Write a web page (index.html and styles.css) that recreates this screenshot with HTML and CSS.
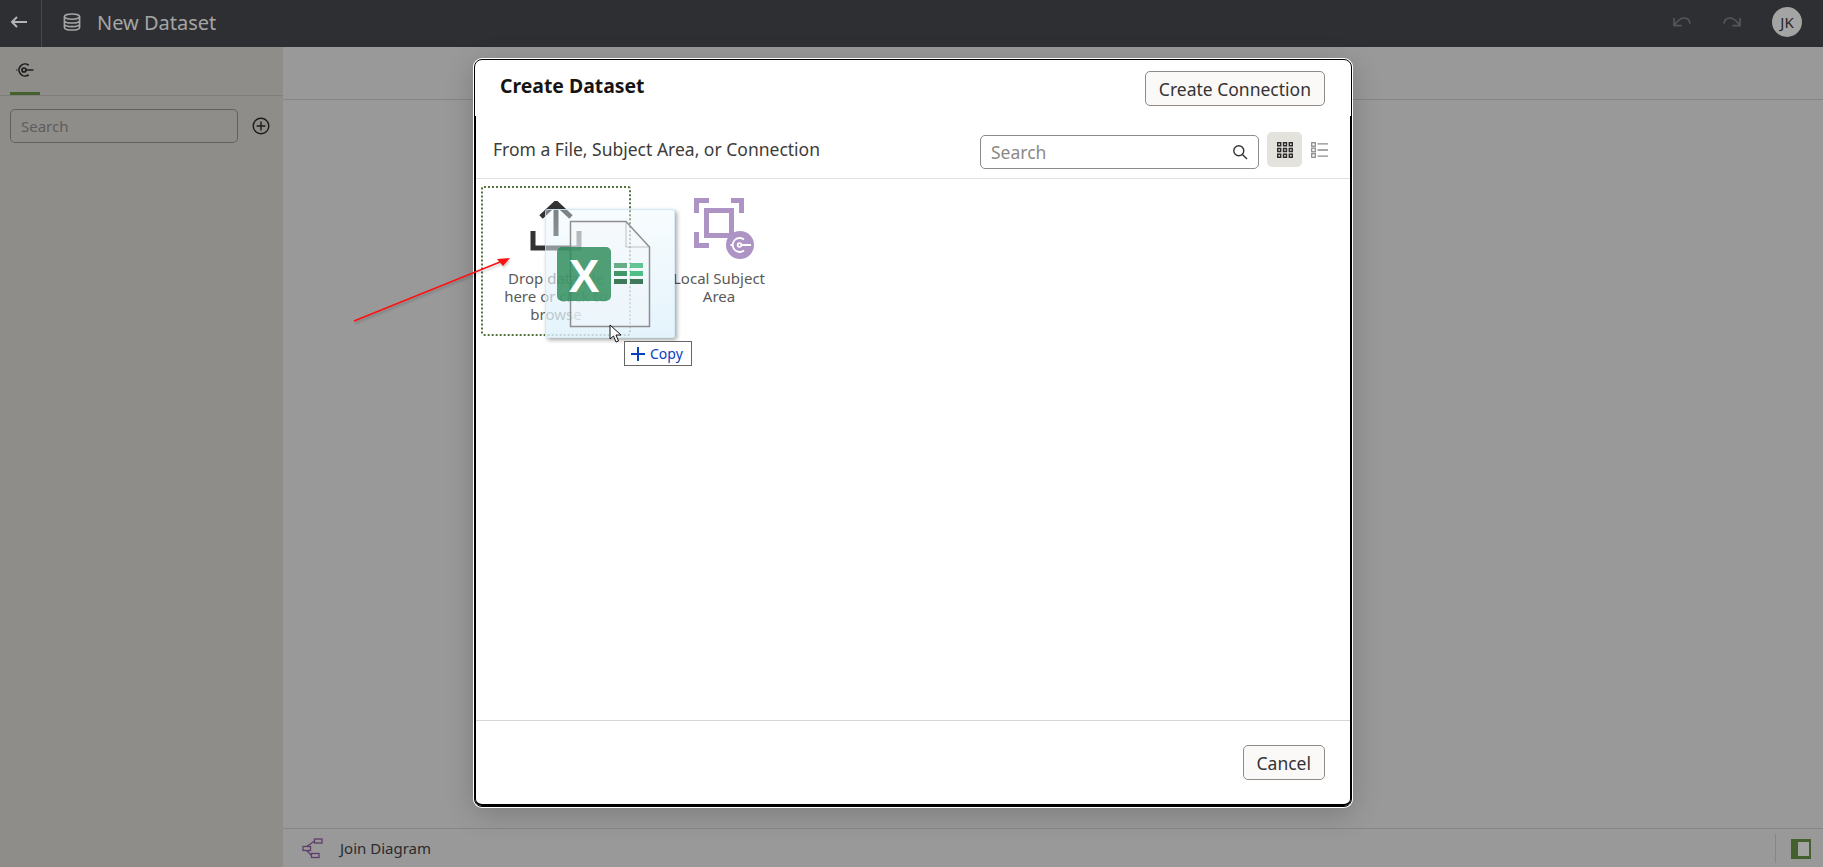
FILE: index.html
```html
<!DOCTYPE html>
<html>
<head>
    <meta charset="UTF-8">
    <title>New Dataset</title>
    <link rel="stylesheet" href="styles.css">
</head>
<body>
    <header class="topbar">
        <div class="back">
            <svg width="18" height="14" viewBox="0 0 18 14"><path d="M17 7H2M7 2L2 7l5 5" fill="none" stroke="#b4b4b4" stroke-width="2"/></svg>
        </div>
        <svg class="db-icon" width="18" height="18" viewBox="0 0 18 18" fill="none" stroke="#a5a5a5" stroke-width="1.6"><ellipse cx="9" cy="3.6" rx="7.6" ry="2.6"/><path d="M1.4 3.6v10.8c0 1.5 3.4 2.6 7.6 2.6s7.6-1.1 7.6-2.6V3.6M1.4 7.4c0 1.5 3.4 2.6 7.6 2.6s7.6-1.1 7.6-2.6M1.4 11c0 1.5 3.4 2.6 7.6 2.6s7.6-1.1 7.6-2.6"/></svg>
        <h1 class="page-title">New Dataset</h1>
        <div class="top-actions">
            <svg width="18" height="12" viewBox="0 0 18 12" fill="none" stroke="#55565a" stroke-width="1.7"><path d="M1 2v7.6h7.6M1.4 9.2C4 5.4 7 2 11 2c3.6 0 5.6 2.6 6 5.6"/></svg>
            <svg class="redo" width="18" height="12" viewBox="0 0 18 12" fill="none" stroke="#55565a" stroke-width="1.7"><path d="M17 2v7.6H9.4M16.6 9.2C14 5.4 11 2 7 2 3.4 2 1.4 4.6 1 7.6"/></svg>
            <div class="avatar">JK</div>
        </div>
    </header>

    <div class="workspace">
        <aside class="side">
            <div class="side-tabs">
                <div class="side-tab">
                    <svg width="18" height="16" viewBox="0 0 18 16" fill="none" stroke="#1c1c1c" stroke-width="1.7"><path d="M12.6 3.2A6 6 0 1 0 12.6 12.8"/><circle cx="8" cy="8" r="2"/><path d="M10 8h7.4M.4 8h1"/></svg>
                </div>
            </div>
            <div class="side-search">
                <div class="side-input">Search</div>
                <svg width="18" height="18" viewBox="0 0 18 18" fill="none" stroke="#1c1c1c" stroke-width="1.4"><circle cx="9" cy="9" r="7.8"/><path d="M9 4.6v8.8M4.6 9h8.8"/></svg>
            </div>
        </aside>
        <main class="canvas">
            <div class="canvas-head"></div>
            <div class="canvas-body"></div>
            <footer class="canvas-foot">
                <svg class="join-icon" width="21" height="21" viewBox="0 0 21 21" fill="none" stroke="#5e3d6a" stroke-width="1.3"><rect x="12.5" y="1" width="7.5" height="4"/><rect x="1" y="8.5" width="7.5" height="4"/><rect x="9.5" y="15.5" width="7.5" height="4"/><path d="M4.8 8.5L12.5 3M4.8 12.5L9.5 17.5"/></svg>
                <span class="join-label">Join Diagram</span>
                <div class="foot-right">
                    <div class="panel-toggle"><div class="panel-toggle-in"></div></div>
                </div>
            </footer>
        </main>
    </div>

    <section class="dialog">
        <div class="dialog-head">
            <h2 class="dialog-title">Create Dataset</h2>
            <button class="btn btn-wide">Create Connection</button>
        </div>
        <div class="dialog-main">
            <div class="toolbar">
                <div class="toolbar-label">From a File, Subject Area, or Connection</div>
                <div class="dialog-search">
                    <span>Search</span>
                    <svg width="16" height="16" viewBox="0 0 16 16" fill="none" stroke="#333" stroke-width="1.4"><circle cx="6.8" cy="6.8" r="5"/><path d="M10.4 10.4L15 15"/></svg>
                </div>
                <div class="view-btn">
                    <svg width="16" height="16" viewBox="0 0 16 16" fill="#2c2c2c">
                        <path fill-rule="evenodd" d="M0 0h4.4v4.4H0zM1.4 1.4v1.6H3V1.400zM5.800 0h4.400v4.400H5.800zM7.200 1.400v1.600h1.600V1.400zM11.600 0H16v4.400h-4.400zM13 1.400v1.600h1.600V1.400zM0 5.800h4.400v4.400H0zM1.400 7.200v1.600H3V7.200zM5.800 5.800h4.400v4.400H5.800zM7.200 7.200v1.600h1.600V7.200zM11.600 5.800H16v4.400h-4.400zM13 7.200v1.600h1.600V7.200zM0 11.600h4.400V16H0zM1.400 13v1.600H3V13zM5.800 11.600h4.400V16H5.800zM7.200 13v1.600h1.600V13zM11.600 11.600H16V16h-4.400zM13 13v1.600h1.600V13z"/>
                    </svg>
                </div>
                <svg class="list-icon" width="17" height="16" viewBox="0 0 17 16" fill="none" stroke="#8d8d8d" stroke-width="1.300"><rect x=".7" y=".7" width="3.600" height="3.600"/><rect x=".7" y="6.200" width="3.600" height="3.600"/><rect x=".7" y="11.700" width="3.600" height="3.600"/><path d="M6.500 1.800H17M6.500 8H17M6.500 14.200H17"/></svg>
            </div>
            <div class="tiles">
                <div class="tile tile-drop">
                    <svg class="tile-icon" width="52" height="50" viewBox="0 0 52 50" fill="none" stroke="#333" stroke-width="5"><path d="M11 16L26 2l15 14M26 3v32M3 30v17h46V30"/></svg>
                    <div class="tile-text">Drop data file here or click to browse</div>
                </div>
                <div class="tile">
                    <svg class="tile-icon tile-icon-area" width="50" height="50" viewBox="0 0 50 50">
                        <g fill="none" stroke="#ae94c4" stroke-width="5"><path d="M2.500 15V2.500H15M37 2.500h10.500V15M15 47.500H2.500V34"/><rect x="12.500" y="12.500" width="25" height="25"/></g>
                        <circle cx="46" cy="47" r="14" fill="#ae94c4"/>
                        <g fill="none" stroke="#fff" stroke-width="1.800"><path d="M50 41.500a7 7 0 1 0 0 11"/><circle cx="45.500" cy="47" r="1.800"/><path d="M47.300 47H57M36.500 47h1.500"/></g>
                    </svg>
                    <div class="tile-text">Local Subject Area</div>
                </div>
            </div>
            <div class="dialog-foot">
                <button class="btn">Cancel</button>
            </div>
        </div>
    </section>

    <!-- drag ghost + annotation sit on top of the dialog -->
    <div class="ghost">
        <svg class="ghost-art" width="130" height="130" viewBox="0 0 130 130">
            <path d="M25.500 12.500H81L104.500 38V117.500H25.500z" fill="#f4f8fa" fill-opacity=".4" stroke="#8e8e8e" stroke-width="1.500"/>
            <path d="M81 12.500V38H104.500" fill="none" stroke="#8e8e8e" stroke-width="1" stroke-opacity=".5"/>
            <rect x="12" y="38" width="54" height="54" rx="5" fill="#2b8a58" fill-opacity=".82"/>
            <text class="ghost-x" x="39" y="83">X</text>
            <g fill="#2e8b57">
                <rect x="69" y="54" width="13" height="5" fill-opacity=".7"/><rect x="85" y="54" width="13" height="5" fill="#3cb878" fill-opacity=".8"/>
                <rect x="69" y="62" width="13" height="5" fill-opacity=".9"/><rect x="85" y="62" width="13" height="5" fill="#3cb878" fill-opacity=".9"/>
                <rect x="69" y="70" width="13" height="5" fill="#2a6b48" fill-opacity=".9"/><rect x="85" y="70" width="13" height="5" fill="#2a6b48" fill-opacity=".9"/>
            </g>
        </svg>
    </div>
    <svg class="cursor" width="14" height="20" viewBox="0 0 14 20"><path d="M1 1v14l3.500-3 2.500 6 2.500-1-2.500-6H12z" fill="#fff" stroke="#111" stroke-width="1"/></svg>
    <div class="copy-tag">
        <svg width="14" height="14" viewBox="0 0 14 14"><path d="M7 0v14M0 7h14" stroke="#0a3ec2" stroke-width="2"/></svg>
        <span>Copy</span>
    </div>
    <svg class="red-arrow" width="170" height="75" viewBox="0 0 170 75">
        <path d="M4 66L150 7" stroke="#ff1010" stroke-width="1.500"/>
        <path d="M160 3L147 4 153 11z" fill="#ff1010"/>
    </svg>
</body>
</html>
```

FILE: styles.css
```css
* {
    box-sizing: border-box;
}
html, body {
    height: 100%;
}
body {
    margin: 0;
    display: flex;
    flex-direction: column;
    overflow: hidden;
    font-family: "Noto Sans", "Open Sans", sans-serif;
    color: #333;
    background-color: #999;
}

/* top bar */
.topbar {
    height: 47px;
    flex: none;
    display: flex;
    align-items: center;
    background-color: #2e2f33;
}
.back {
    width: 42px;
    height: 47px;
    display: flex;
    align-items: center;
    padding: 0 0 3px 10px;
    border-right: 1px solid #47484c;
}
.db-icon {
    margin: 0 0 3px 21px;
}
.page-title {
    margin: 0 0 3px 16px;
    font-size: 20px;
    font-weight: 400;
    color: #a5a5a5;
}
.top-actions {
    margin: 0 21px 3px auto;
    display: flex;
    align-items: center;
}
.redo {
    margin-left: 32px;
}
.avatar {
    width: 30px;
    height: 30px;
    margin-left: 31px;
    border-radius: 50%;
    background-color: #a4a4a4;
    color: #26272a;
    font-size: 15px;
    line-height: 30px;
    text-align: center;
}

/* page behind the dialog */
.workspace {
    flex: 1;
    display: flex;
    min-height: 0;
}
.side {
    width: 283px;
    flex: none;
    background-color: #8e8d8a;
}
.side-tabs {
    height: 49px;
    padding-left: 10px;
    border-bottom: 1px solid #7f7e7b;
}
.side-tab {
    width: 30px;
    height: 48px;
    padding: 15px 0 0 6px;
    border-bottom: 3px solid #44602f;
}
.side-tab svg {
    display: block;
}
.side-search {
    display: flex;
    align-items: center;
    gap: 14px;
    padding: 13px 0 0 10px;
}
.side-input {
    width: 228px;
    height: 34px;
    padding-left: 10px;
    border: 1px solid #625f5c;
    border-radius: 5px;
    font-size: 15px;
    line-height: 32px;
    color: #5f5e5c;
}
.canvas {
    flex: 1;
    display: flex;
    flex-direction: column;
    background-color: #999;
}
.canvas-head {
    height: 53px;
    flex: none;
    border-bottom: 1px solid #868686;
}
.canvas-body {
    flex: 1;
}
.canvas-foot {
    height: 39px;
    flex: none;
    display: flex;
    align-items: center;
    padding-left: 19px;
    border-top: 1px solid #868686;
}
.join-label {
    margin-left: 17px;
    font-size: 15px;
    color: #2b2b2b;
}
.foot-right {
    margin-left: auto;
    height: 29px;
    padding: 5px 12px 0 15px;
    border-left: 1px solid #868686;
}
.panel-toggle {
    width: 20px;
    height: 20px;
    padding: 3px 2px 3px 7px;
    background-color: #44602f;
}
.panel-toggle-in {
    height: 100%;
    background-color: #a3a3a3;
}

/* dialog */
.dialog {
    position: absolute;
    left: 474px;
    top: 59px;
    width: 878px;
    height: 748px;
    display: flex;
    flex-direction: column;
    background-color: #fff;
    border: 1px solid #000;
    border-radius: 8px;
    box-shadow: 0 0 0 1px #fff, 0 6px 30px rgba(0, 0, 0, .2);
}
.dialog-head {
    height: 56px;
    flex: none;
    display: flex;
    justify-content: space-between;
    padding: 11px 26px 0 25px;
}
.dialog-title {
    margin: 0;
    padding-top: 2px;
    font-size: 19.4px;
    line-height: 26px;
    font-weight: 700;
    color: #161513;
}
.btn {
    height: 35px;
    padding: 0 13px;
    border: 1px solid #8f8a85;
    border-radius: 5px;
    background-color: #fbf9f8;
    font-family: inherit;
    font-size: 17.5px;
    color: #333;
}
.dialog-main {
    flex: 1;
    display: flex;
    flex-direction: column;
    min-height: 0;
    border: solid #000;
    border-width: 0 1px 2px 1px;
    border-radius: 0 0 7px 7px;
}
.toolbar {
    height: 63px;
    flex: none;
    display: flex;
    align-items: center;
    padding: 3px 22px 0 17px;
    border-bottom: 1px solid #e2e0dc;
}
.toolbar-label {
    flex: 1;
    font-size: 17.5px;
    color: #3d3c3a;
}
.dialog-search {
    width: 279px;
    height: 34px;
    margin-top: 6px;
    display: flex;
    align-items: center;
    justify-content: space-between;
    padding: 0 10px;
    border: 1px solid #8f8a85;
    border-radius: 5px;
    font-size: 17.5px;
    color: #8b8986;
}
.view-btn {
    width: 35px;
    height: 35px;
    margin: 2px 0 0 8px;
    display: flex;
    align-items: center;
    justify-content: center;
    border-radius: 5px;
    background-color: #e4e2dd;
}
.list-icon {
    margin: 2px 0 0 9px;
}
.tiles {
    flex: 1;
    display: flex;
    gap: 13px;
    padding: 7px 0 0 5px;
}
.tile {
    width: 150px;
    height: 150px;
    padding: 12px 19px 0;
    text-align: center;
}
.tile-drop {
    padding: 13px 18px 0;
    border: 2px dotted #55733c;
    border-radius: 3px;
}
.tile-icon {
    display: block;
    margin: 0 auto 18px;
}
.tile-icon-area {
    margin-bottom: 21px;
    overflow: visible;
}
.tile-text {
    font-size: 15px;
    line-height: 18px;
    color: #5a5957;
}
.dialog-foot {
    height: 84px;
    flex: none;
    display: flex;
    align-items: center;
    justify-content: flex-end;
    padding: 0 25px 0 0;
    border-top: 1px solid #d9d6d1;
}

/* drag ghost */
.ghost {
    position: absolute;
    left: 545px;
    top: 209px;
    width: 130px;
    height: 129px;
    border: 1px solid rgba(200, 228, 245, .7);
    border-radius: 3px;
    background: linear-gradient(to bottom, rgba(236, 247, 253, .4), rgba(222, 241, 251, .8));
    box-shadow: 2px 2px 4px rgba(0, 0, 0, .35);
}
.ghost-art {
    display: block;
    margin: -1px;
}
.ghost-x {
    font-family: "Liberation Sans", sans-serif;
    font-size: 46px;
    font-weight: 700;
    fill: #fff;
    text-anchor: middle;
}
.cursor {
    position: absolute;
    left: 609px;
    top: 324px;
}
.copy-tag {
    position: absolute;
    left: 624px;
    top: 341px;
    width: 68px;
    height: 25px;
    display: flex;
    align-items: center;
    gap: 5px;
    padding-left: 6px;
    border: 1px solid #666;
    background-color: #fff;
    font-size: 14px;
    color: #0a3ec2;
}
.red-arrow {
    position: absolute;
    left: 350px;
    top: 255px;
    filter: drop-shadow(1px 2px 1px rgba(0, 0, 0, .2));
}
```
